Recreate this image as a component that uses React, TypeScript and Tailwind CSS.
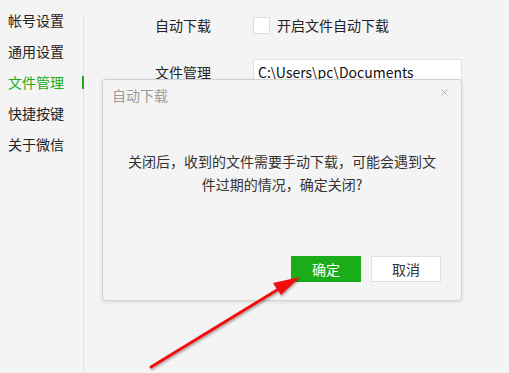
import { X } from 'lucide-react';

const menu = ['帐号设置', '通用设置', '文件管理', '快捷按键', '关于微信'];

export default function App() {
  return (
    <div
      className="relative w-[509px] h-[373px] overflow-hidden bg-[#f4f4f4] text-[14px] text-[#222]"
      style={{ fontFamily: '"Noto Sans CJK SC", "Microsoft YaHei", sans-serif' }}
    >
      <div className="flex h-full">
        {/* sidebar */}
        <div className="w-[83px] pt-[9px] pl-[8px] flex flex-col">
          {menu.map((m) => (
            <div
              key={m}
              className={`h-[31px] leading-[22px] ${m === '文件管理' ? 'text-[#1aad19]' : 'text-[#222]'}`}
            >
              {m}
            </div>
          ))}
        </div>
        <div className="relative mt-[14px] w-px bg-[#e2e2e2]">
          <div className="absolute left-[-1px] top-[62px] w-[2px] h-[13px] bg-[#1aad19]" />
        </div>

        {/* content */}
        <div className="flex-1 pl-[71px] pt-[17px]">
          <div className="flex items-center h-[17px]">
            <span className="w-[98px] leading-[17px]">自动下载</span>
            <span className="w-[17px] h-[17px] bg-white border border-[#dcdcdc]" />
            <span className="ml-[7px] leading-[17px]">开启文件自动下载</span>
          </div>
          <div className="flex items-center mt-[25px] h-[26px]">
            <span className="w-[98px]">文件管理</span>
            <div className="w-[209px] h-[26px] bg-white border border-[#e2e2e2] pl-[4px] leading-[24px] text-[#111]">
              C:\Users\pc\Documents
            </div>
          </div>
          <div className="ml-[98px] mt-[23px] w-[209px] h-[27px] bg-white border border-[#e2e2e2]" />
        </div>
      </div>

      {/* dialog */}
      <div className="absolute left-[102px] top-[79px] w-[360px] h-[222px] bg-[#f4f4f4] border border-[#d2d2d2] rounded-[3px] shadow-[0_1px_4px_rgba(0,0,0,0.12)] flex flex-col">
        <div className="flex items-center justify-between h-[30px] pl-[9px] pr-[11px]">
          <span className="text-[#9a9a9a] leading-[30px]">自动下载</span>
          <X size={11} strokeWidth={1.3} className="text-[#8a8a8a] -mt-[6px]" />
        </div>
        <div className="mt-[40px] px-[24px] text-center leading-[23px] text-[#333]">
          关闭后，收到的文件需要手动下载，可能会遇到文件过期的情况，确定关闭?
        </div>
        <div className="mt-auto mb-[18px] flex justify-end gap-[10px] pr-[20px]">
          <button className="w-[70px] h-[26px] bg-[#1aad19] text-white text-[14px] leading-[26px]">确定</button>
          <button className="w-[70px] h-[26px] bg-white border border-[#e0e0e0] text-[#333] text-[14px] leading-[24px]">
            取消
          </button>
        </div>
      </div>

      {/* arrow */}
      <svg className="absolute left-0 top-0" width="509" height="373" viewBox="0 0 509 373">
        <defs>
          <filter id="sh" x="-20%" y="-20%" width="140%" height="140%">
            <feDropShadow dx="1" dy="1.5" stdDeviation="1" floodColor="#000" floodOpacity="0.35" />
          </filter>
        </defs>
        <g filter="url(#sh)">
          <line x1="151" y1="367" x2="282" y2="287" stroke="#f01010" strokeWidth="3" strokeLinecap="round" />
          <polygon points="300,277 273,283 281,295" fill="#f01010" />
        </g>
      </svg>
    </div>
  );
}
